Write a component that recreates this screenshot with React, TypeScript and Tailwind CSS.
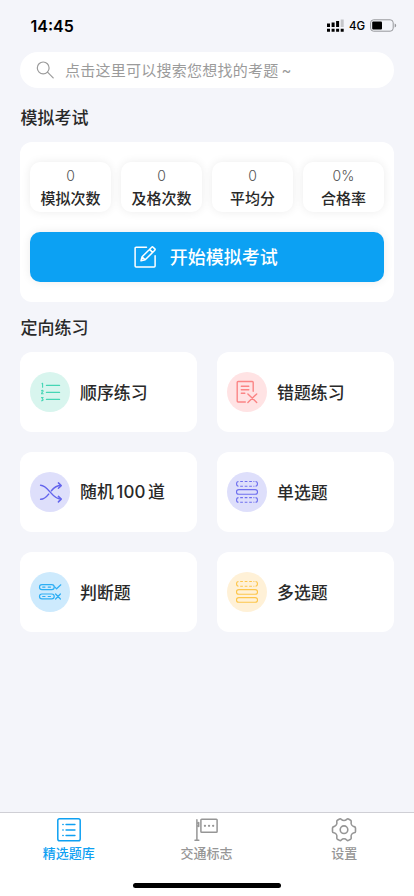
import type { ReactNode } from 'react';

const stats = [
  { value: '0', label: '模拟次数' },
  { value: '0', label: '及格次数' },
  { value: '0', label: '平均分' },
  { value: '0%', label: '合格率' },
];

function IconCircle({ className, children }: { className: string; children: ReactNode }) {
  return (
    <svg
      viewBox="0 0 40 40"
      className={`size-10 shrink-0 rounded-full ${className}`}
      fill="none"
      stroke="currentColor"
      strokeWidth="1.2"
      strokeLinecap="round"
      strokeLinejoin="round"
    >
      {children}
    </svg>
  );
}

function DashedBar({ y }: { y: number }) {
  const b = y + 4.7;
  return (
    <g strokeLinecap="butt" strokeWidth="1.1">
      <path d={`M11.500 ${y}c-2.600 0-2.600 4.700 0 4.700M28.500 ${y}c2.600 0 2.600 4.700 0 4.700`} />
      <path d={`M13.200 ${y}h2.700M17.700 ${y}h2.700M22.200 ${y}h2.700M13.200 ${b}h2.700M17.700 ${b}h2.700M22.200 ${b}h2.700M26.400 ${y}h1M26.400 ${b}h1`} />
    </g>
  );
}

function SolidBar({ y }: { y: number }) {
  return <rect x="9.5" y={y} width="21" height="4.7" rx="2.3" strokeWidth="1.1" />;
}

const practices = [
  {
    label: '顺序练习',
    icon: (
      <IconCircle className="bg-[#d8f5ee] text-[#45d6b5]">
        <path d="M16.500 13.400H29.500M16.500 20.400H29.500M16.500 27.400H29.500" strokeWidth="1.4" />
        <path d="M12 11.700l.6-.4v3.900M11.500 18.900c.3-.8 1.700-.6 1.600.3 0 .7-1.600 1.200-1.600 2.500h1.700M11.500 25.500h1.600l-1 1.400c1.500.1 1.300 2.100-.600 1.900" strokeWidth="1.1" />
      </IconCircle>
    ),
  },
  {
    label: '错题练习',
    icon: (
      <IconCircle className="bg-[#ffe3e4] text-[#fb8585]">
        <path d="M26.200 19.300V10.400a.9.9 0 0 0-.9-.9H11.100a.9.9 0 0 0-.9.9v18.700a.9.9 0 0 0 .9.9h7.200" strokeWidth="1.4" />
        <path d="M14.300 14.300h7.500M14.300 17.800h7.500M14.300 21.300h3.500M20.900 21.900l8.800 8.500M29.700 21.900l-8.800 8.500" strokeWidth="1.4" />
      </IconCircle>
    ),
  },
  {
    label: (
      <>
        随机<span className="mx-[2.5px] font-['Inter'] tracking-[0.1px]">100</span>道
      </>
    ),
    icon: (
      <IconCircle className="bg-[#dedffb] text-[#6465ed]">
        <path d="M10.600 13.300c7.800.1 11.300 13.800 20.200 13.800M10.600 27.300c3.200 0 5.800-2.300 8.100-5.200M21.400 18.700c2.600-3.100 5.200-5.100 9.400-5.100" strokeWidth="1.500" />
        <path d="M28.400 10.900l2.800 2.700-2.800 2.700M28.400 24.400l2.800 2.700-2.800 2.800" strokeWidth="1.500" />
      </IconCircle>
    ),
  },
  {
    label: '单选题',
    icon: (
      <IconCircle className="bg-[#dedffb] text-[#6f70ef]">
        <DashedBar y={9.5} />
        <SolidBar y={17.6} />
        <DashedBar y={25.6} />
      </IconCircle>
    ),
  },
  {
    label: '判断题',
    icon: (
      <IconCircle className="bg-[#cdeafd] text-[#2daef4]">
        <rect x="9.500" y="12.700" width="14.700" height="4.900" rx="2.400" />
        <rect x="9.500" y="22" width="14.700" height="4.900" rx="2.400" />
        <path d="M12.700 15.100h2.300M18.200 15.100h2.300M12.700 24.500h2.300M18.200 24.500h2.300" />
        <path d="M24.700 14.900l1.900 1.900 4.200-4M25.600 22l4.800 5M30.400 22l-4.800 5" />
      </IconCircle>
    ),
  },
  {
    label: '多选题',
    icon: (
      <IconCircle className="bg-[#fff1d7] text-[#fdc64c]">
        <DashedBar y={9.5} />
        <SolidBar y={17.6} />
        <SolidBar y={25.6} />
      </IconCircle>
    ),
  },
];

const tabs = [
  {
    label: '精选题库',
    color: 'text-[#0ea0f2]',
    icon: (
      <>
        <rect x=".8" y=".8" width="22.400" height="22" rx="1.800" strokeWidth="1.500" />
        <path d="M9 6.500h9M9 12h9M9 17.500h9" />
        <path d="M5.900 6.500h.2M5.900 12h.2M5.900 17.500h.2" strokeWidth="1.600" />
      </>
    ),
  },
  {
    label: '交通标志',
    color: 'text-[#969696]',
    icon: (
      <>
        <path d="M2.900 1.700v20.600M1 22.300h3.800M2.900 5.100h1.600M2.900 8h1.600M4.700 4.500v4" strokeWidth="1.500" />
        <rect x="6.900" y="1.300" width="16.200" height="13" rx=".8" strokeWidth="1.500" />
        <path d="M10.900 7.800h.1M15 7.800h.1M19.100 7.800h.1" strokeWidth="2.200" />
      </>
    ),
  },
  {
    label: '设置',
    color: 'text-[#969696]',
    icon: (
      <>
        <path
          strokeWidth="1.600"
          d="M7.500 1c.8-.5 1.400-.1 1.800.4 1.500 1.500 3.900 1.500 5.400 0 .5-.5 1-.9 1.800-.4l2.100 1.200c.8.5.7 1.100.6 1.800-.5 2.100.8 4.100 2.900 4.600.9.2 1.400.5 1.400 1.400v3.400c0 .9-.5 1.200-1.400 1.400-2.100.5-3.400 2.500-2.900 4.600.1.7.2 1.300-.6 1.800l-2.100 1.200c-.8.5-1.300.1-1.800-.4-1.500-1.500-3.900-1.500-5.400 0-.4.5-1 .9-1.800.4l-2.100-1.200c-.8-.5-.7-1.100-.6-1.800.5-2.100-.8-4.100-2.900-4.600C1 14.600.5 14.300.5 13.400V10c0-.9.5-1.200 1.400-1.400C4 8.100 5.300 6.100 4.800 4c-.1-.7-.2-1.300.6-1.800Z"
        />
        <circle cx="12" cy="11.700" r="3.800" strokeWidth="1.600" />
      </>
    ),
  },
];

export default function App() {
  return (
    <div className="flex h-[896px] w-full flex-col bg-[#f4f5fa] font-['Noto_Sans_CJK_SC',sans-serif] text-[#292929]">
      <header className="flex h-[52px] items-center justify-between pr-[17px] pb-px pl-[30.5px] text-black">
        <span className="font-['Inter'] text-[16px] leading-5 font-semibold">14:45</span>
        <div className="flex items-center">
          <svg className="h-[14px] w-[17px]" viewBox="0 0 17 14">
            <path d="M0 4.500h3v3.500H0zM4.600 3.500h3V8h-3zM9.100 2h3v6h-3zM0 9.700h3v3H0zM4.600 9.700h3v3h-3zM9.100 9.700h3v3h-3zM13.700 9.700h3v3h-3z" />
            <path d="M13.700.5h3V8h-3z" fill="#c5c6ca" />
          </svg>
          <span className="ml-[5px] w-[16px] font-['Inter'] text-[11.5px] leading-4 font-medium">4G</span>
          <svg className="ml-[5px] h-[13px] w-[27px]" viewBox="0 0 27 13" fill="none">
            <rect x=".6" y=".8" width="22.600" height="11.400" rx="3" stroke="#96979b" />
            <rect x="2.200" y="2.400" width="9.800" height="8.200" rx="1" fill="#000" />
            <path d="M24.700 4.500c2 .8 2 3.200 0 4z" fill="#96979b" />
          </svg>
        </div>
      </header>

      <main className="flex-1 px-5">
        <div className="flex h-9 items-center rounded-full bg-white pl-4 text-[#9b9b9b]">
          <svg className="size-[18px]" viewBox="0 0 18 18" fill="none" stroke="currentColor" strokeWidth="1.2" strokeLinecap="round">
            <circle cx="7.200" cy="6.900" r="5.900" />
            <path d="M11.500 11.200l5.700 5.700" />
          </svg>
          <span className="ml-[11px] text-[15px] leading-5 tracking-[0.25px]">
            点击这里可以搜索您想找的考题<span className="ml-[3px] font-['Inter']">~</span>
          </span>
        </div>

        <h2 className="flex h-[54px] items-center pt-[3px] pl-[0.5px] text-[17px] font-medium">模拟考试</h2>

        <section className="h-40 rounded-xl bg-white px-[10px] pt-5">
          <div className="grid grid-cols-4 gap-[10px]">
            {stats.map((s) => (
              <div key={s.label} className="flex h-[50px] flex-col items-center rounded-[10px] bg-white pt-[4px] shadow-[0_0_10px_rgba(0,0,0,0.08)]">
                <span className="font-['Inter'] text-[14px] leading-5 font-light text-[#555]">{s.value}</span>
                <span className="mt-[2px] text-[15px] leading-5 font-medium">{s.label}</span>
              </div>
            ))}
          </div>
          <button className="mt-5 flex h-[50px] w-full items-center justify-center rounded-[10px] bg-[#0ca1f3] pr-[2px] text-white shadow-[0_0_10px_rgba(0,0,0,0.08)]">
            <svg className="size-[22px]" viewBox="0 0 22 22" fill="none" stroke="currentColor" strokeWidth="1.5" strokeLinecap="round" strokeLinejoin="round">
              <path d="M12.500 1.300H2.100a1 1 0 0 0-1 1V20a1 1 0 0 0 1 1h18a1 1 0 0 0 1-1V9.700" />
              <path d="M7 14.800l1.100-4L17.700 1.200a1 1 0 0 1 1.400 0l1.700 1.700a1 1 0 0 1 0 1.400l-9.600 9.500L7 14.800ZM15.600 3.400l3 3M8.200 11l2.900 2.700" />
            </svg>
            <span className="ml-[13.5px] pb-px text-[18px] font-medium">开始模拟考试</span>
          </button>
        </section>

        <h2 className="flex h-[50px] items-center pl-[0.5px] text-[17px] font-medium">定向练习</h2>

        <section className="grid grid-cols-2 gap-5">
          {practices.map((p, i) => (
            <div key={i} className="flex h-20 items-center rounded-xl bg-white pl-[10px]">
              {p.icon}
              <span className="ml-[10px] pb-px text-[16.9px] font-medium">{p.label}</span>
            </div>
          ))}
        </section>
      </main>

      <footer className="h-[84px] border-t border-[#cfcfd5] bg-white">
        <nav className="grid h-[70px] grid-cols-3 pr-px">
          {tabs.map((t) => (
            <div key={t.label} className={`flex flex-col items-center pt-[5px] ${t.color}`}>
              <svg className="size-6 overflow-visible" viewBox="0 0 24 24" fill="none" stroke="currentColor" strokeWidth="1.3" strokeLinecap="round" strokeLinejoin="round">
                {t.icon}
              </svg>
              <span className="mt-px text-[13px] leading-5 font-medium">{t.label}</span>
            </div>
          ))}
        </nav>
        <div className="mx-auto h-[5px] w-[148px] rounded-full bg-black" />
      </footer>
    </div>
  );
}
